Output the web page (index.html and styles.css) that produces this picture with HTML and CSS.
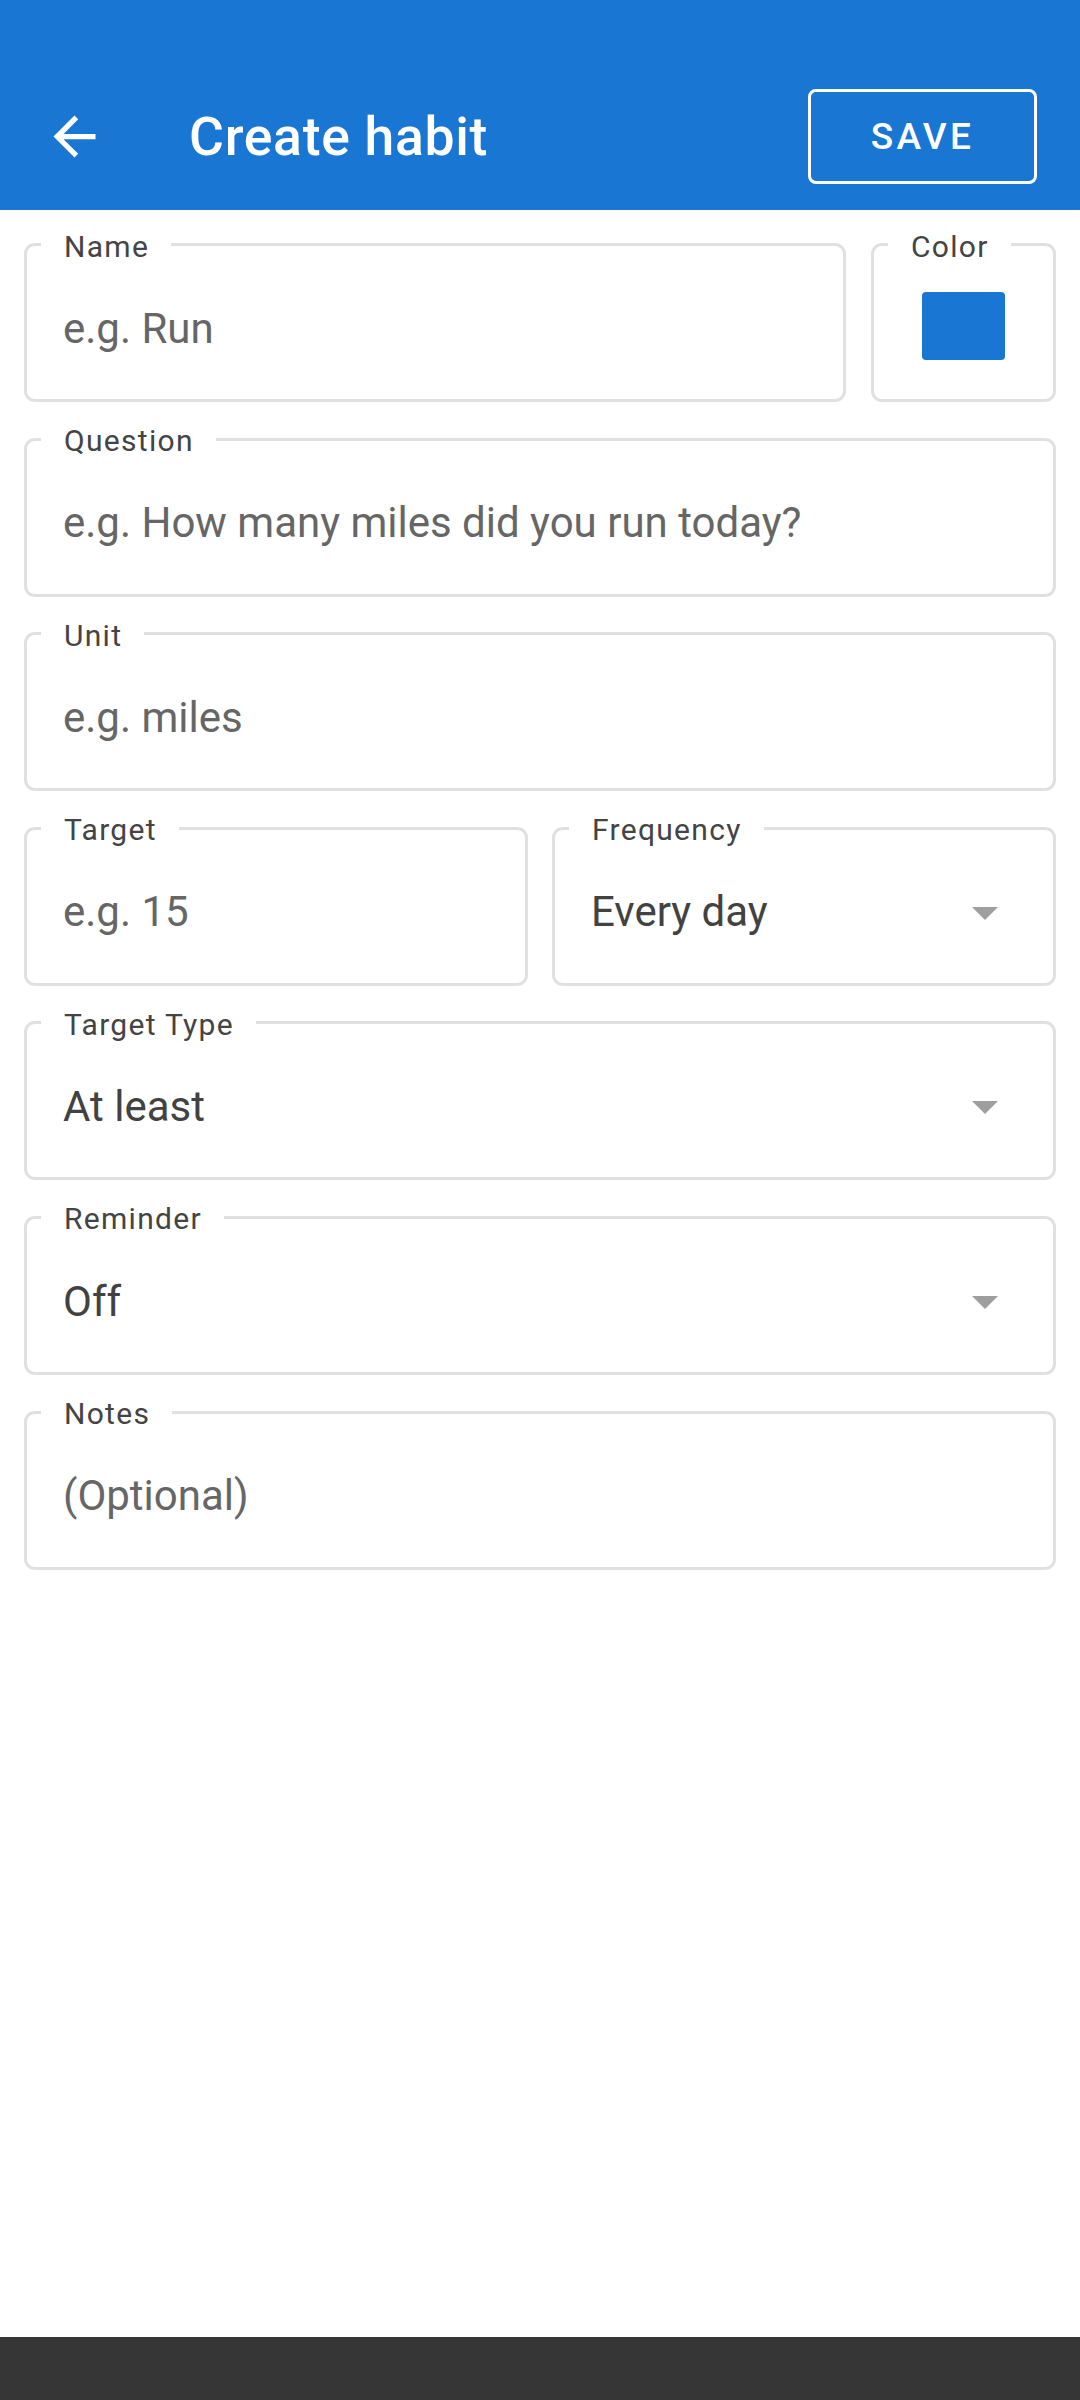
FILE: index.html
```html
<!DOCTYPE html>
<html lang="en">
<head>
<meta charset="utf-8">
<title>Create habit</title>
<link rel="stylesheet" href="styles.css">
</head>
<body>
<header class="appbar">
  <svg class="back" viewBox="0 0 24 24" aria-label="Back"><path d="M20 11H7.83l5.59-5.59L12 4l-8 8 8 8 1.41-1.41L7.83 13H20v-2z"/></svg>
  <h1 class="title">Create habit</h1>
  <button class="save">SAVE</button>
</header>
<main class="form">
  <div class="row row-name">
    <fieldset class="field"><legend>Name</legend><div class="value placeholder">e.g. Run</div></fieldset>
    <fieldset class="field"><legend>Color</legend><div class="swatch"></div></fieldset>
  </div>
  <fieldset class="field"><legend>Question</legend><div class="value placeholder">e.g. How many miles did you run today?</div></fieldset>
  <fieldset class="field"><legend>Unit</legend><div class="value placeholder">e.g. miles</div></fieldset>
  <div class="row row-half">
    <fieldset class="field"><legend>Target</legend><div class="value placeholder">e.g. 15</div></fieldset>
    <fieldset class="field"><legend>Frequency</legend><div class="value select"><span>Every day</span><span class="caret"></span></div></fieldset>
  </div>
  <fieldset class="field"><legend>Target Type</legend><div class="value select"><span>At least</span><span class="caret"></span></div></fieldset>
  <fieldset class="field"><legend>Reminder</legend><div class="value select"><span>Off</span><span class="caret"></span></div></fieldset>
  <fieldset class="field"><legend>Notes</legend><div class="value placeholder">(Optional)</div></fieldset>
</main>
<div class="navbar"></div>
</body>
</html>
```
FILE: styles.css
```css
html, body {
  margin: 0;
  padding: 0;
}
body {
  width: 1080px;
  min-height: 2400px;
  display: flex;
  flex-direction: column;
  background: #ffffff;
  font-family: Roboto, "Noto Sans", sans-serif;
}
.appbar {
  background: #1976d2;
  height: 147px;
  padding-top: 63px;
  display: flex;
  align-items: center;
  color: #ffffff;
}
.back {
  width: 63px;
  height: 63px;
  margin-left: 42.5px;
  fill: #ffffff;
  flex: none;
}
.title {
  margin: 0 0 0 83.5px;
  font-size: 53.5px;
  font-weight: 500;
  letter-spacing: 0.7px;
  line-height: 63px;
}
.save {
  margin-left: auto;
  margin-right: 43px;
  width: 229px;
  height: 95px;
  box-sizing: border-box;
  border: 3px solid #ffffff;
  border-radius: 8px;
  background: transparent;
  color: #ffffff;
  font-family: Roboto, sans-serif;
  font-size: 37px;
  font-weight: 500;
  letter-spacing: 3.3px;
  padding: 0;
}
.form {
  flex: 1;
  padding: 14.5px 24px 0;
  display: flex;
  flex-direction: column;
  gap: 17.1px;
}
.row {
  display: grid;
}
.row-name {
  grid-template-columns: 822px 185px;
  column-gap: 25px;
}
.row-half {
  grid-template-columns: 504px 504px;
  column-gap: 24px;
}
.field {
  margin: 0;
  padding: 0;
  min-width: 0;
  box-sizing: border-box;
  height: 177.5px;
  border: 3px solid #e0e0e0;
  border-radius: 11px;
}
.field legend {
  margin-left: 14px;
  padding: 4px 22px 0 23px;
  font-size: 30px;
  line-height: 36px;
  letter-spacing: 1.3px;
  color: #444444;
}
.value {
  padding: 39.1px 55px 0 36px;
  font-size: 42px;
  line-height: 50px;
  white-space: nowrap;
}
.placeholder {
  color: #666666;
}
.select {
  display: flex;
  justify-content: space-between;
  align-items: center;
  color: #424242;
}
.caret {
  width: 0;
  height: 0;
  margin-top: 2px;
  border-left: 13px solid transparent;
  border-right: 13px solid transparent;
  border-top: 13px solid #9e9e9e;
}
.swatch {
  width: 83px;
  height: 68px;
  margin: 27.5px auto 0;
  background: #1976d2;
  border-radius: 4px;
}
.navbar {
  height: 63px;
  background: #363636;
}
```
